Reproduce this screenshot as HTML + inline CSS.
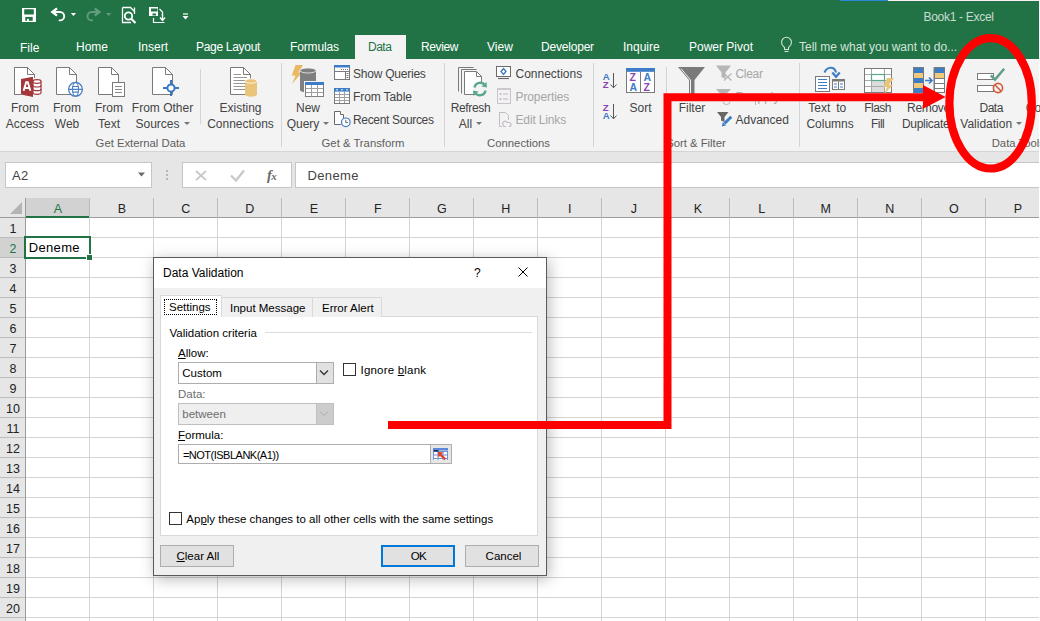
<!DOCTYPE html><html><head><meta charset="utf-8"><style>
html,body{margin:0;padding:0;}
body{width:1040px;height:621px;overflow:hidden;position:relative;background:#fff;font-family:"Liberation Sans",sans-serif;}
.t{position:absolute;white-space:nowrap;}
.r{position:absolute;box-sizing:border-box;}
svg{position:absolute;overflow:visible;}
</style></head><body>
<div class="r" style="left:0px;top:0px;width:1039px;height:59px;background:#217346;"></div>
<div class="r" style="left:840px;top:0px;width:48px;height:1px;background:#2b88d8;"></div>
<div class="r" style="left:888px;top:0px;width:151px;height:1px;background:#fbeef4;"></div>
<div class="t" style="left:923.5px;top:7.34px;font-size:12px;line-height:20px;color:#c9dccf;letter-spacing:-0.3px;">Book1 - Excel</div>
<div class="r" style="left:355px;top:35px;width:51px;height:24px;background:#f3f3f3;"></div>
<div class="t" style="left:20px;top:37.84px;font-size:12px;line-height:20px;color:#fff;letter-spacing:0px;">File</div>
<div class="t" style="left:76px;top:36.84px;font-size:12px;line-height:20px;color:#fff;letter-spacing:0px;">Home</div>
<div class="t" style="left:138px;top:36.84px;font-size:12px;line-height:20px;color:#fff;letter-spacing:0px;">Insert</div>
<div class="t" style="left:196px;top:36.84px;font-size:12px;line-height:20px;color:#fff;letter-spacing:-0.3px;">Page Layout</div>
<div class="t" style="left:290px;top:36.84px;font-size:12px;line-height:20px;color:#fff;letter-spacing:-0.15px;">Formulas</div>
<div class="t" style="left:368px;top:36.84px;font-size:12px;line-height:20px;color:#217346;letter-spacing:-0.5px;">Data</div>
<div class="t" style="left:421px;top:36.84px;font-size:12px;line-height:20px;color:#fff;letter-spacing:-0.4px;">Review</div>
<div class="t" style="left:487px;top:36.84px;font-size:12px;line-height:20px;color:#fff;letter-spacing:0px;">View</div>
<div class="t" style="left:541px;top:36.84px;font-size:12px;line-height:20px;color:#fff;letter-spacing:-0.2px;">Developer</div>
<div class="t" style="left:623px;top:36.84px;font-size:12px;line-height:20px;color:#fff;letter-spacing:0px;">Inquire</div>
<div class="t" style="left:689px;top:36.84px;font-size:12px;line-height:20px;color:#fff;letter-spacing:0px;">Power Pivot</div>
<div class="t" style="left:799px;top:36.84px;font-size:12px;line-height:20px;color:#d3e3d8;">Tell me what you want to do...</div>
<svg style="left:0;top:0" width="800" height="60"><path d="M784.5 49.5V47.5C782.5 46 781.5 44.2 781.5 42.3A5 5 0 0 1 791.5 42.3C791.5 44.2 790.5 46 788.5 47.5V49.5Z" fill="none" stroke="#d3e3d8" stroke-width="1.1"/><path d="M784.5 51.5H788.5" stroke="#d3e3d8" stroke-width="1.1"/></svg><div class="r" style="left:0px;top:59px;width:1039px;height:92px;background:#f3f3f3;"></div>
<div class="r" style="left:0px;top:151px;width:1039px;height:1px;background:#d5d5d5;"></div>
<div class="t" style="left:-75px;width:200px;text-align:center;top:97.84px;font-size:12px;line-height:20px;color:#444;letter-spacing:0px;">From</div>
<div class="t" style="left:-75px;width:200px;text-align:center;top:113.84px;font-size:12px;line-height:20px;color:#444;letter-spacing:0px;">Access</div>
<div class="t" style="left:-33px;width:200px;text-align:center;top:97.84px;font-size:12px;line-height:20px;color:#444;letter-spacing:0px;">From</div>
<div class="t" style="left:-33px;width:200px;text-align:center;top:113.84px;font-size:12px;line-height:20px;color:#444;letter-spacing:0px;">Web</div>
<div class="t" style="left:9px;width:200px;text-align:center;top:97.84px;font-size:12px;line-height:20px;color:#444;letter-spacing:0px;">From</div>
<div class="t" style="left:9px;width:200px;text-align:center;top:113.84px;font-size:12px;line-height:20px;color:#444;letter-spacing:0px;">Text</div>
<div class="t" style="left:62.5px;width:200px;text-align:center;top:97.84px;font-size:12px;line-height:20px;color:#444;letter-spacing:0px;">From Other</div>
<div class="t" style="left:62.5px;width:200px;text-align:center;top:113.84px;font-size:12px;line-height:20px;color:#444;letter-spacing:0px;">Sources<span style="display:inline-block;width:0;height:0;border-left:3px solid transparent;border-right:3px solid transparent;border-top:3px solid #777;vertical-align:middle;margin-left:4px;position:relative;top:-1px"></span></div>
<div class="t" style="left:140.5px;width:200px;text-align:center;top:97.84px;font-size:12px;line-height:20px;color:#444;letter-spacing:0px;">Existing</div>
<div class="t" style="left:140.5px;width:200px;text-align:center;top:113.84px;font-size:12px;line-height:20px;color:#444;letter-spacing:0px;">Connections</div>
<div class="t" style="left:208px;width:200px;text-align:center;top:97.84px;font-size:12px;line-height:20px;color:#444;letter-spacing:0px;">New</div>
<div class="t" style="left:208px;width:200px;text-align:center;top:113.84px;font-size:12px;line-height:20px;color:#444;letter-spacing:0px;">Query<span style="display:inline-block;width:0;height:0;border-left:3px solid transparent;border-right:3px solid transparent;border-top:3px solid #777;vertical-align:middle;margin-left:4px;position:relative;top:-1px"></span></div>
<div class="t" style="left:370.5px;width:200px;text-align:center;top:97.84px;font-size:12px;line-height:20px;color:#444;letter-spacing:-0.35px;">Refresh</div>
<div class="t" style="left:370.5px;width:200px;text-align:center;top:113.84px;font-size:12px;line-height:20px;color:#444;">All<span style="display:inline-block;width:0;height:0;border-left:3px solid transparent;border-right:3px solid transparent;border-top:3px solid #777;vertical-align:middle;margin-left:4px;position:relative;top:-1px"></span></div>
<div class="t" style="left:777.6px;width:200px;text-align:center;top:97.84px;font-size:12px;line-height:20px;color:#444;letter-spacing:-0.5px;">Flash</div>
<div class="t" style="left:777.6px;width:200px;text-align:center;top:113.84px;font-size:12px;line-height:20px;color:#444;letter-spacing:-0.5px;">Fill</div>
<div class="t" style="left:828.5px;width:200px;text-align:center;top:97.84px;font-size:12px;line-height:20px;color:#444;letter-spacing:-0.3px;">Remove</div>
<div class="t" style="left:828.5px;width:200px;text-align:center;top:113.84px;font-size:12px;line-height:20px;color:#444;letter-spacing:-0.3px;">Duplicates</div>
<div class="t" style="left:891.2px;width:200px;text-align:center;top:97.84px;font-size:12px;line-height:20px;color:#444;letter-spacing:-0.5px;">Data</div>
<div class="t" style="left:891.2px;width:200px;text-align:center;top:113.84px;font-size:12px;line-height:20px;color:#444;">Validation<span style="display:inline-block;width:0;height:0;border-left:3px solid transparent;border-right:3px solid transparent;border-top:3px solid #777;vertical-align:middle;margin-left:4px;position:relative;top:-1px"></span></div>
<div class="t" style="left:727.3px;width:200px;text-align:center;top:97.84px;font-size:12px;line-height:20px;color:#444;word-spacing:2.5px;">Text to</div>
<div class="t" style="left:730.1px;width:200px;text-align:center;top:113.84px;font-size:12px;line-height:20px;color:#444;">Columns</div>
<div class="t" style="left:540.5px;width:200px;text-align:center;top:97.84px;font-size:12px;line-height:20px;color:#444;">Sort</div>
<div class="t" style="left:592px;width:200px;text-align:center;top:97.84px;font-size:12px;line-height:20px;color:#444;">Filter</div>
<div class="t" style="left:1025.8px;top:97.84px;font-size:12px;line-height:20px;color:#444;">Co</div>
<div class="t" style="left:353px;top:63.84px;font-size:12px;line-height:20px;color:#444;letter-spacing:-0.23px;">Show Queries</div>
<div class="t" style="left:353px;top:86.84px;font-size:12px;line-height:20px;color:#444;letter-spacing:-0.1px;">From Table</div>
<div class="t" style="left:353px;top:109.84px;font-size:12px;line-height:20px;color:#444;letter-spacing:-0.34px;">Recent Sources</div>
<div class="t" style="left:515.5px;top:63.84px;font-size:12px;line-height:20px;color:#444;letter-spacing:0px;">Connections</div>
<div class="t" style="left:515.5px;top:86.84px;font-size:12px;line-height:20px;color:#a6a6a6;letter-spacing:-0.1px;">Properties</div>
<div class="t" style="left:515.5px;top:109.84px;font-size:12px;line-height:20px;color:#a6a6a6;letter-spacing:-0.15px;">Edit Links</div>
<div class="t" style="left:735.5px;top:63.84px;font-size:12px;line-height:20px;color:#a6a6a6;letter-spacing:-0.3px;">Clear</div>
<div class="t" style="left:735.5px;top:86.84px;font-size:12px;line-height:20px;color:#a6a6a6;letter-spacing:0px;">Reapply</div>
<div class="t" style="left:735.5px;top:109.84px;font-size:12px;line-height:20px;color:#444;letter-spacing:0px;">Advanced</div>
<div class="t" style="left:991.7px;top:132.58px;font-size:11.3px;line-height:20px;color:#5e5e5e;">Data Tools</div>
<div class="t" style="left:40.5px;width:200px;text-align:center;top:132.58px;font-size:11.3px;line-height:20px;color:#5e5e5e;">Get External Data</div>
<div class="t" style="left:263px;width:200px;text-align:center;top:132.58px;font-size:11.3px;line-height:20px;color:#5e5e5e;">Get &amp; Transform</div>
<div class="t" style="left:418.5px;width:200px;text-align:center;top:132.58px;font-size:11.3px;line-height:20px;color:#5e5e5e;">Connections</div>
<div class="t" style="left:596px;width:200px;text-align:center;top:132.58px;font-size:11.3px;line-height:20px;color:#5e5e5e;">Sort &amp; Filter</div>
<div class="r" style="left:281px;top:63px;width:1px;height:84px;background:#d4d4d4;"></div>
<div class="r" style="left:444px;top:63px;width:1px;height:84px;background:#d4d4d4;"></div>
<div class="r" style="left:593px;top:63px;width:1px;height:84px;background:#d4d4d4;"></div>
<div class="r" style="left:799px;top:63px;width:1px;height:84px;background:#d4d4d4;"></div>
<div class="r" style="left:200px;top:69px;width:1px;height:55px;background:#d4d4d4;"></div>
<div class="r" style="left:666px;top:67px;width:1px;height:58px;background:#d4d4d4;"></div>
<div class="r" style="left:0px;top:152px;width:1039px;height:46px;background:#e6e6e6;"></div>
<div class="r" style="left:5px;top:162px;width:147px;height:26px;background:#fff;border:1px solid #c6c6c6;"></div>
<div class="t" style="left:12px;top:165.50px;font-size:13px;line-height:20px;color:#444;letter-spacing:0.3px;">A2</div>
<div class="r" style="left:182px;top:162px;width:110px;height:26px;background:#fff;border:1px solid #c6c6c6;"></div>
<svg style="left:0;top:0" width="400" height="200"><path d="M138 172.5H145L141.5 176.5Z" fill="#6a6a6a"/><circle cx="167" cy="171" r="0.9" fill="#a0a0a0"/><circle cx="167" cy="175" r="0.9" fill="#a0a0a0"/><circle cx="167" cy="179" r="0.9" fill="#a0a0a0"/><path d="M196 171L206 180M206 171L196 180" stroke="#c8c8c8" stroke-width="1.7"/><path d="M231 175.5L236 180.5L244 170.5" fill="none" stroke="#c8c8c8" stroke-width="2.3"/></svg>
<div class="t" style="left:267px;top:166px;font-family:'Liberation Serif',serif;font-style:italic;font-weight:bold;font-size:14.5px;line-height:18px;color:#6a6a6a;">f<span style="font-size:11px;position:relative;top:0px;left:-0.5px">x</span></div>
<div class="r" style="left:295px;top:162px;width:744px;height:26px;background:#fff;border:1px solid #c6c6c6;border-right:none;"></div>
<div class="t" style="left:307.5px;top:165.50px;font-size:13px;line-height:20px;color:#444;letter-spacing:0.35px;">Deneme</div>
<div class="r" style="left:0px;top:198px;width:1039px;height:20px;background:#e6e6e6;"></div>
<div class="r" style="left:25px;top:198px;width:65px;height:20px;background:#d2d2d2;"></div>
<div class="r" style="left:0px;top:217px;width:1039px;height:1px;background:#9b9b9b;"></div>
<div class="r" style="left:25px;top:216px;width:65px;height:2px;background:#217346;"></div>
<svg style="left:0;top:0" width="30" height="220"><path d="M10 214H22V202Z" fill="#b4b4b4"/></svg>
<div class="t" style="left:-42.2px;width:200px;text-align:center;top:198.67px;font-size:12.5px;line-height:20px;color:#217346;">A</div>
<div class="r" style="left:89px;top:198px;width:1px;height:20px;background:#bcbcbc;"></div>
<div class="t" style="left:21.799999999999997px;width:200px;text-align:center;top:198.67px;font-size:12.5px;line-height:20px;color:#222;">B</div>
<div class="r" style="left:153px;top:198px;width:1px;height:20px;background:#bcbcbc;"></div>
<div class="t" style="left:85.80000000000001px;width:200px;text-align:center;top:198.67px;font-size:12.5px;line-height:20px;color:#222;">C</div>
<div class="r" style="left:217px;top:198px;width:1px;height:20px;background:#bcbcbc;"></div>
<div class="t" style="left:149.8px;width:200px;text-align:center;top:198.67px;font-size:12.5px;line-height:20px;color:#222;">D</div>
<div class="r" style="left:281px;top:198px;width:1px;height:20px;background:#bcbcbc;"></div>
<div class="t" style="left:213.8px;width:200px;text-align:center;top:198.67px;font-size:12.5px;line-height:20px;color:#222;">E</div>
<div class="r" style="left:345px;top:198px;width:1px;height:20px;background:#bcbcbc;"></div>
<div class="t" style="left:277.8px;width:200px;text-align:center;top:198.67px;font-size:12.5px;line-height:20px;color:#222;">F</div>
<div class="r" style="left:409px;top:198px;width:1px;height:20px;background:#bcbcbc;"></div>
<div class="t" style="left:341.8px;width:200px;text-align:center;top:198.67px;font-size:12.5px;line-height:20px;color:#222;">G</div>
<div class="r" style="left:473px;top:198px;width:1px;height:20px;background:#bcbcbc;"></div>
<div class="t" style="left:405.8px;width:200px;text-align:center;top:198.67px;font-size:12.5px;line-height:20px;color:#222;">H</div>
<div class="r" style="left:537px;top:198px;width:1px;height:20px;background:#bcbcbc;"></div>
<div class="t" style="left:469.79999999999995px;width:200px;text-align:center;top:198.67px;font-size:12.5px;line-height:20px;color:#222;">I</div>
<div class="r" style="left:601px;top:198px;width:1px;height:20px;background:#bcbcbc;"></div>
<div class="t" style="left:533.8px;width:200px;text-align:center;top:198.67px;font-size:12.5px;line-height:20px;color:#222;">J</div>
<div class="r" style="left:665px;top:198px;width:1px;height:20px;background:#bcbcbc;"></div>
<div class="t" style="left:597.8px;width:200px;text-align:center;top:198.67px;font-size:12.5px;line-height:20px;color:#222;">K</div>
<div class="r" style="left:729px;top:198px;width:1px;height:20px;background:#bcbcbc;"></div>
<div class="t" style="left:661.8px;width:200px;text-align:center;top:198.67px;font-size:12.5px;line-height:20px;color:#222;">L</div>
<div class="r" style="left:793px;top:198px;width:1px;height:20px;background:#bcbcbc;"></div>
<div class="t" style="left:725.8px;width:200px;text-align:center;top:198.67px;font-size:12.5px;line-height:20px;color:#222;">M</div>
<div class="r" style="left:857px;top:198px;width:1px;height:20px;background:#bcbcbc;"></div>
<div class="t" style="left:789.8px;width:200px;text-align:center;top:198.67px;font-size:12.5px;line-height:20px;color:#222;">N</div>
<div class="r" style="left:921px;top:198px;width:1px;height:20px;background:#bcbcbc;"></div>
<div class="t" style="left:853.8px;width:200px;text-align:center;top:198.67px;font-size:12.5px;line-height:20px;color:#222;">O</div>
<div class="r" style="left:985px;top:198px;width:1px;height:20px;background:#bcbcbc;"></div>
<div class="t" style="left:917.8px;width:200px;text-align:center;top:198.67px;font-size:12.5px;line-height:20px;color:#222;">P</div>
<div class="r" style="left:1049px;top:198px;width:1px;height:20px;background:#bcbcbc;"></div>
<div class="r" style="left:0px;top:218px;width:25px;height:403px;background:#e6e6e6;"></div>
<div class="r" style="left:0px;top:237px;width:25px;height:20px;background:#d2d2d2;"></div>
<div class="r" style="left:25px;top:198px;width:1px;height:423px;background:#9b9b9b;"></div>
<div class="r" style="left:0px;top:237px;width:25px;height:1px;background:#bcbcbc;"></div>
<div class="r" style="left:26px;top:237px;width:1013px;height:1px;background:#d4d4d4;"></div>
<div class="t" style="left:-87px;width:200px;text-align:center;top:218.67px;font-size:12.5px;line-height:20px;color:#222;">1</div>
<div class="r" style="left:0px;top:257px;width:25px;height:1px;background:#bcbcbc;"></div>
<div class="r" style="left:26px;top:257px;width:1013px;height:1px;background:#d4d4d4;"></div>
<div class="t" style="left:-87px;width:200px;text-align:center;top:238.67px;font-size:12.5px;line-height:20px;color:#217346;">2</div>
<div class="r" style="left:0px;top:277px;width:25px;height:1px;background:#bcbcbc;"></div>
<div class="r" style="left:26px;top:277px;width:1013px;height:1px;background:#d4d4d4;"></div>
<div class="t" style="left:-87px;width:200px;text-align:center;top:258.67px;font-size:12.5px;line-height:20px;color:#222;">3</div>
<div class="r" style="left:0px;top:297px;width:25px;height:1px;background:#bcbcbc;"></div>
<div class="r" style="left:26px;top:297px;width:1013px;height:1px;background:#d4d4d4;"></div>
<div class="t" style="left:-87px;width:200px;text-align:center;top:278.67px;font-size:12.5px;line-height:20px;color:#222;">4</div>
<div class="r" style="left:0px;top:317px;width:25px;height:1px;background:#bcbcbc;"></div>
<div class="r" style="left:26px;top:317px;width:1013px;height:1px;background:#d4d4d4;"></div>
<div class="t" style="left:-87px;width:200px;text-align:center;top:298.67px;font-size:12.5px;line-height:20px;color:#222;">5</div>
<div class="r" style="left:0px;top:337px;width:25px;height:1px;background:#bcbcbc;"></div>
<div class="r" style="left:26px;top:337px;width:1013px;height:1px;background:#d4d4d4;"></div>
<div class="t" style="left:-87px;width:200px;text-align:center;top:318.67px;font-size:12.5px;line-height:20px;color:#222;">6</div>
<div class="r" style="left:0px;top:357px;width:25px;height:1px;background:#bcbcbc;"></div>
<div class="r" style="left:26px;top:357px;width:1013px;height:1px;background:#d4d4d4;"></div>
<div class="t" style="left:-87px;width:200px;text-align:center;top:338.67px;font-size:12.5px;line-height:20px;color:#222;">7</div>
<div class="r" style="left:0px;top:377px;width:25px;height:1px;background:#bcbcbc;"></div>
<div class="r" style="left:26px;top:377px;width:1013px;height:1px;background:#d4d4d4;"></div>
<div class="t" style="left:-87px;width:200px;text-align:center;top:358.67px;font-size:12.5px;line-height:20px;color:#222;">8</div>
<div class="r" style="left:0px;top:397px;width:25px;height:1px;background:#bcbcbc;"></div>
<div class="r" style="left:26px;top:397px;width:1013px;height:1px;background:#d4d4d4;"></div>
<div class="t" style="left:-87px;width:200px;text-align:center;top:378.67px;font-size:12.5px;line-height:20px;color:#222;">9</div>
<div class="r" style="left:0px;top:417px;width:25px;height:1px;background:#bcbcbc;"></div>
<div class="r" style="left:26px;top:417px;width:1013px;height:1px;background:#d4d4d4;"></div>
<div class="t" style="left:-87px;width:200px;text-align:center;top:398.67px;font-size:12.5px;line-height:20px;color:#222;">10</div>
<div class="r" style="left:0px;top:437px;width:25px;height:1px;background:#bcbcbc;"></div>
<div class="r" style="left:26px;top:437px;width:1013px;height:1px;background:#d4d4d4;"></div>
<div class="t" style="left:-87px;width:200px;text-align:center;top:418.67px;font-size:12.5px;line-height:20px;color:#222;">11</div>
<div class="r" style="left:0px;top:457px;width:25px;height:1px;background:#bcbcbc;"></div>
<div class="r" style="left:26px;top:457px;width:1013px;height:1px;background:#d4d4d4;"></div>
<div class="t" style="left:-87px;width:200px;text-align:center;top:438.67px;font-size:12.5px;line-height:20px;color:#222;">12</div>
<div class="r" style="left:0px;top:477px;width:25px;height:1px;background:#bcbcbc;"></div>
<div class="r" style="left:26px;top:477px;width:1013px;height:1px;background:#d4d4d4;"></div>
<div class="t" style="left:-87px;width:200px;text-align:center;top:458.67px;font-size:12.5px;line-height:20px;color:#222;">13</div>
<div class="r" style="left:0px;top:497px;width:25px;height:1px;background:#bcbcbc;"></div>
<div class="r" style="left:26px;top:497px;width:1013px;height:1px;background:#d4d4d4;"></div>
<div class="t" style="left:-87px;width:200px;text-align:center;top:478.67px;font-size:12.5px;line-height:20px;color:#222;">14</div>
<div class="r" style="left:0px;top:517px;width:25px;height:1px;background:#bcbcbc;"></div>
<div class="r" style="left:26px;top:517px;width:1013px;height:1px;background:#d4d4d4;"></div>
<div class="t" style="left:-87px;width:200px;text-align:center;top:498.67px;font-size:12.5px;line-height:20px;color:#222;">15</div>
<div class="r" style="left:0px;top:537px;width:25px;height:1px;background:#bcbcbc;"></div>
<div class="r" style="left:26px;top:537px;width:1013px;height:1px;background:#d4d4d4;"></div>
<div class="t" style="left:-87px;width:200px;text-align:center;top:518.67px;font-size:12.5px;line-height:20px;color:#222;">16</div>
<div class="r" style="left:0px;top:557px;width:25px;height:1px;background:#bcbcbc;"></div>
<div class="r" style="left:26px;top:557px;width:1013px;height:1px;background:#d4d4d4;"></div>
<div class="t" style="left:-87px;width:200px;text-align:center;top:538.67px;font-size:12.5px;line-height:20px;color:#222;">17</div>
<div class="r" style="left:0px;top:577px;width:25px;height:1px;background:#bcbcbc;"></div>
<div class="r" style="left:26px;top:577px;width:1013px;height:1px;background:#d4d4d4;"></div>
<div class="t" style="left:-87px;width:200px;text-align:center;top:558.67px;font-size:12.5px;line-height:20px;color:#222;">18</div>
<div class="r" style="left:0px;top:597px;width:25px;height:1px;background:#bcbcbc;"></div>
<div class="r" style="left:26px;top:597px;width:1013px;height:1px;background:#d4d4d4;"></div>
<div class="t" style="left:-87px;width:200px;text-align:center;top:578.67px;font-size:12.5px;line-height:20px;color:#222;">19</div>
<div class="r" style="left:0px;top:617px;width:25px;height:1px;background:#bcbcbc;"></div>
<div class="r" style="left:26px;top:617px;width:1013px;height:1px;background:#d4d4d4;"></div>
<div class="t" style="left:-87px;width:200px;text-align:center;top:598.67px;font-size:12.5px;line-height:20px;color:#222;">20</div>
<div class="r" style="left:89px;top:218px;width:1px;height:403px;background:#d4d4d4;"></div>
<div class="r" style="left:153px;top:218px;width:1px;height:403px;background:#d4d4d4;"></div>
<div class="r" style="left:217px;top:218px;width:1px;height:403px;background:#d4d4d4;"></div>
<div class="r" style="left:281px;top:218px;width:1px;height:403px;background:#d4d4d4;"></div>
<div class="r" style="left:345px;top:218px;width:1px;height:403px;background:#d4d4d4;"></div>
<div class="r" style="left:409px;top:218px;width:1px;height:403px;background:#d4d4d4;"></div>
<div class="r" style="left:473px;top:218px;width:1px;height:403px;background:#d4d4d4;"></div>
<div class="r" style="left:537px;top:218px;width:1px;height:403px;background:#d4d4d4;"></div>
<div class="r" style="left:601px;top:218px;width:1px;height:403px;background:#d4d4d4;"></div>
<div class="r" style="left:665px;top:218px;width:1px;height:403px;background:#d4d4d4;"></div>
<div class="r" style="left:729px;top:218px;width:1px;height:403px;background:#d4d4d4;"></div>
<div class="r" style="left:793px;top:218px;width:1px;height:403px;background:#d4d4d4;"></div>
<div class="r" style="left:857px;top:218px;width:1px;height:403px;background:#d4d4d4;"></div>
<div class="r" style="left:921px;top:218px;width:1px;height:403px;background:#d4d4d4;"></div>
<div class="r" style="left:985px;top:218px;width:1px;height:403px;background:#d4d4d4;"></div>
<div class="r" style="left:1049px;top:218px;width:1px;height:403px;background:#d4d4d4;"></div>
<div class="r" style="left:24px;top:236px;width:67px;height:23px;border:2px solid #217346;"></div>
<div class="r" style="left:86px;top:254px;width:7px;height:7px;background:#217346;border:1px solid #fff;"></div>
<div class="t" style="left:28.7px;top:238.00px;font-size:13px;line-height:20px;color:#000;letter-spacing:0.35px;">Deneme</div>
<div class="r" style="left:153px;top:257px;width:394px;height:319px;background:#f0f0f0;border:1px solid #5a5a5a;box-shadow:2px 3px 14px rgba(0,0,0,0.28);"></div>
<div class="r" style="left:154px;top:258px;width:392px;height:30px;background:#fff;"></div>
<div class="t" style="left:163px;top:262.84px;font-size:12px;line-height:20px;color:#000;">Data Validation</div>
<div class="t" style="left:474px;top:262.84px;font-size:12px;line-height:20px;color:#000;">?</div>
<svg style="left:518px;top:267px" width="10" height="10"><path d="M0.5 0.5L9.5 9.5M9.5 0.5L0.5 9.5" stroke="#000" stroke-width="1"/></svg>
<div class="r" style="left:160px;top:316px;width:378px;height:220px;background:#fff;border:1px solid #d9d9d9;"></div>
<div class="r" style="left:221px;top:297px;width:92px;height:20px;background:#f0f0f0;border:1px solid #d9d9d9;border-bottom:none;"></div>
<div class="r" style="left:312px;top:297px;width:70px;height:20px;background:#f0f0f0;border:1px solid #d9d9d9;border-bottom:none;"></div>
<div class="r" style="left:160px;top:295px;width:62px;height:22px;background:#fff;border:1px solid #d9d9d9;border-bottom:none;"></div>
<div class="r" style="left:164px;top:299px;width:53px;height:16px;border:1px dotted #000;"></div>
<div class="t" style="left:169px;top:297.02px;font-size:11.5px;line-height:20px;color:#000;">Settings</div>
<div class="t" style="left:230px;top:298.02px;font-size:11.5px;line-height:20px;color:#000;">Input Message</div>
<div class="t" style="left:322px;top:298.02px;font-size:11.5px;line-height:20px;color:#000;">Error Alert</div>
<div class="t" style="left:169.5px;top:323.02px;font-size:11.5px;line-height:20px;color:#000;">Validation criteria</div>
<div class="r" style="left:265px;top:332px;width:267px;height:1px;background:#dcdcdc;"></div>
<div class="t" style="left:178px;top:343.02px;font-size:11.5px;line-height:20px;color:#000;"><u>A</u>llow:</div>
<div class="r" style="left:178px;top:362px;width:156px;height:22px;background:#fff;border:1px solid #adadad;"></div>
<div class="r" style="left:316px;top:363px;width:17px;height:20px;background:#e1e1e1;border-left:1px solid #adadad;"></div>
<div class="t" style="left:182.3px;top:363.02px;font-size:11.5px;line-height:20px;color:#000;">Custom</div>
<div class="r" style="left:343px;top:363px;width:13px;height:13px;background:#fff;border:1px solid #333;"></div>
<div class="t" style="left:360.5px;top:359.52px;font-size:11.5px;line-height:20px;color:#000;letter-spacing:0.2px;">Ignore <u>b</u>lank</div>
<div class="t" style="left:178px;top:384.02px;font-size:11.5px;line-height:20px;color:#6d6d6d;">Data:</div>
<div class="r" style="left:178px;top:403px;width:156px;height:22px;background:#efefef;border:1px solid #bfbfbf;"></div>
<div class="r" style="left:316px;top:404px;width:17px;height:20px;background:#cccccc;border-left:1px solid #bfbfbf;"></div>
<div class="t" style="left:182.3px;top:404.02px;font-size:11.5px;line-height:20px;color:#6d6d6d;">between</div>
<svg style="left:0;top:0" width="600" height="600"><path d="M320 370.5L324 374.5L328 370.5" fill="none" stroke="#333" stroke-width="1.3"/><path d="M320 411.5L324 415.5L328 411.5" fill="none" stroke="#a8a8a8" stroke-width="1"/></svg>
<div class="t" style="left:178px;top:425.02px;font-size:11.5px;line-height:20px;color:#000;"><u>F</u>ormula:</div>
<div class="r" style="left:178px;top:444px;width:274px;height:20px;background:#fff;border:1px solid #adadad;"></div>
<div class="r" style="left:430px;top:444px;width:22px;height:20px;background:#e6e6e6;border:1px solid #adadad;"></div>
<svg style="left:0;top:0" width="600" height="600"><rect x="433" y="448" width="15" height="12" fill="#fff"/><path d="M433 451.5H448M433 455H448M433 458.5H448M438 451V460M443 451V460M433.5 451V460M447.5 451V460" stroke="#6f93d3" stroke-width="1"/><rect x="433" y="448" width="15" height="2.6" fill="#5b88d8"/><rect x="433.5" y="450" width="5" height="1.6" fill="#1f2f55"/><path d="M437.8 451.8L443.5 452.6L441.6 454.3L446.2 458.6L444.6 460.2L440 455.9L438.3 457.6Z" fill="#e0452f"/></svg>
<div class="t" style="left:182.9px;top:445.19px;font-size:11px;line-height:20px;color:#000;letter-spacing:-0.5px;">=NOT(ISBLANK(A1))</div>
<div class="r" style="left:169px;top:512px;width:13px;height:13px;background:#fff;border:1px solid #333;"></div>
<div class="t" style="left:186.3px;top:509.02px;font-size:11.5px;line-height:20px;color:#000;">Ap<u>p</u>ly these changes to all other cells with the same settings</div>
<div class="r" style="left:160px;top:545px;width:74px;height:22px;background:#e1e1e1;border:1px solid #adadad;"></div>
<div class="t" style="left:176.5px;top:546.02px;font-size:11.5px;line-height:20px;color:#000;"><u>C</u>lear All</div>
<div class="r" style="left:381px;top:545px;width:74px;height:22px;background:#e1e1e1;border:2px solid #0078d7;"></div>
<div class="t" style="left:410.7px;top:546.02px;font-size:11.5px;line-height:20px;color:#000;letter-spacing:-0.6px;">OK</div>
<div class="r" style="left:465px;top:545px;width:74px;height:22px;background:#e1e1e1;border:1px solid #adadad;"></div>
<div class="t" style="left:485.6px;top:546.02px;font-size:11.5px;line-height:20px;color:#000;">Cancel</div>
<svg style="left:0;top:0" width="1040" height="160"><rect x="22" y="8" width="14" height="14" fill="#fff"/><rect x="24.2" y="9.2" width="9.6" height="5.3" rx="0.6" fill="#217346"/><rect x="25.3" y="16.9" width="7.4" height="3.9" fill="#217346"/><rect x="27" y="18.9" width="2" height="2" fill="#fff"/><path d="M57 8.3L52.3 12L57 15.7" fill="none" stroke="#fff" stroke-width="2.3"/><path d="M53.5 12H60A4.2 4.2 0 0 1 60 20.4H59.5" fill="none" stroke="#fff" stroke-width="1.9" stroke-linecap="round"/><path d="M70.8 12.9H76.1L73.45 16Z" fill="#fff"/><g opacity="0.3"><path d="M94.7 8.3L99.4 12L94.7 15.7" fill="none" stroke="#fff" stroke-width="2.3"/><path d="M98.2 12H91.7A4.2 4.2 0 0 0 91.7 20.4H92.2" fill="none" stroke="#fff" stroke-width="1.9" stroke-linecap="round"/><path d="M106 12.9H111.3L108.65 16Z" fill="#fff"/></g><path d="M122.5 7.5H130.5L134.5 11.5V14M134.5 7.5V11.5M122.5 7.5V22.5H131" fill="none" stroke="#fff" stroke-width="1.3"/><circle cx="128.5" cy="16" r="3.7" fill="none" stroke="#fff" stroke-width="1.8"/><path d="M131 18.5L135.5 23" stroke="#fff" stroke-width="2.2"/><path d="M149 7H158V16H149Z" fill="#fff"/><rect x="151" y="8.5" width="6.5" height="3" fill="#217346"/><rect x="152.5" y="13.5" width="3.5" height="2" fill="#217346"/><path d="M153.5 18V22.5H164.5M159.5 9L162.5 12V16" fill="none" stroke="#fff" stroke-width="1.2"/><path d="M162.5 13V20M160 17.5L162.5 20.5L165 17.5" fill="none" stroke="#fff" stroke-width="1.3"/><path d="M183 14H188" stroke="#fff" stroke-width="1.2"/><path d="M182.5 16H188.5L185.5 19.5Z" fill="#fff"/><path d="M14.5 67.5H27.5L34.5 74.5V78M14.5 67.5V94.5H21" fill="#fff" stroke="#7a7a7a"/><path d="M15 68H27.5L34 74.5V94H15Z" fill="#fff"/><path d="M14.5 67.5H27.5L34.5 74.5V78M14.5 67.5V94.5H21M27.5 67.5V74.5H34.5" fill="none" stroke="#7a7a7a"/><path d="M33 81.5V92.5A4 1.8 0 0 0 41 92.5V81.5Z" fill="#fff"/><path d="M33 81.5V92.5A4 1.8 0 0 0 41 92.5V81.5" fill="none" stroke="#a4373a" stroke-width="1.2"/><ellipse cx="37" cy="81.5" rx="4" ry="1.8" fill="#fff" stroke="#a4373a" stroke-width="1.2"/><path d="M33 85.2A4 1.8 0 0 0 41 85.2M33 88.9A4 1.8 0 0 0 41 88.9" fill="none" stroke="#a4373a" stroke-width="1.2"/><path d="M21 79L33 76.8V97L21 94.5Z" fill="#a4373a"/><path d="M23.6 90.8L26.2 82.2H27.8L30.4 90.8M24.6 88H29.4" fill="none" stroke="#fff" stroke-width="1.9"/><path d="M56.5 67.5H69.5L76.5 74.5V94.5H56.5Z" fill="#fff" stroke="#7a7a7a" stroke-width="1"/><path d="M69.5 67.5V74.5H76.5" fill="none" stroke="#7a7a7a" stroke-width="1"/><circle cx="75.5" cy="89.3" r="6.9" fill="#fff" stroke="#4a7fc0" stroke-width="1.3"/><ellipse cx="75.5" cy="89.3" rx="3" ry="6.9" fill="none" stroke="#4a7fc0" stroke-width="1.1"/><path d="M68.6 89.3H82.4M72.5 86.5H78.5M72.5 92.1H78.5" stroke="#4a7fc0" stroke-width="1.2"/><path d="M98.5 67.5H111.5L118.5 74.5V94.5H98.5Z" fill="#fff" stroke="#7a7a7a" stroke-width="1"/><path d="M111.5 67.5V74.5H118.5" fill="none" stroke="#7a7a7a" stroke-width="1"/><rect x="112.5" y="82.5" width="12" height="14" fill="#fff" stroke="#7a7a7a"/><path d="M115 86.5H122M115 89.5H122M115 92.5H122" stroke="#8a8a8a" stroke-width="1"/><path d="M152.5 67.5H165.5L172.5 74.5V94.5H152.5Z" fill="#fff" stroke="#7a7a7a" stroke-width="1"/><path d="M165.5 67.5V74.5H172.5" fill="none" stroke="#7a7a7a" stroke-width="1"/><circle cx="171" cy="88" r="3.6" fill="#fff" stroke="#3c78c0" stroke-width="2"/><path d="M163 88H167.4M174.6 88H179M171 80V84.4M171 91.6V96" stroke="#3c78c0" stroke-width="2"/><path d="M230.5 67.5H243.5L250.5 74.5V94.5H230.5Z" fill="#fff" stroke="#7a7a7a" stroke-width="1"/><path d="M243.5 67.5V74.5H250.5" fill="none" stroke="#7a7a7a" stroke-width="1"/><path d="M233.5 74.5H241M233.5 77.5H247M233.5 80.5H247M233.5 83.5H245M233.5 86.5H245M233.5 89.5H245" stroke="#8a8a8a" stroke-width="0.9"/><path d="M245 81V94.5A6 2.2 0 0 0 257 94.5V81Z" fill="#e9c47a"/><ellipse cx="251" cy="81" rx="6" ry="2.2" fill="#e9c47a" stroke="#fff" stroke-width="0.8"/><path d="M295.5 65H303L298.5 72.5H302L292 84L295.5 75.5H291.7Z" fill="#e9b965"/><path d="M300 70.5V90A8 2.5 0 0 0 316 90V70.5Z" fill="#7f7f7f"/><ellipse cx="308" cy="70.5" rx="8" ry="2.5" fill="#7f7f7f" stroke="#f3f3f3" stroke-width="0.8"/><rect x="304" y="81" width="21" height="17" fill="#f3f3f3"/><rect x="305.5" y="82.5" width="18" height="14" fill="#fff" stroke="#7f7f7f"/><rect x="305" y="82" width="19" height="3" fill="#3d7cc6"/><path d="M306 88.5H323M306 92.5H323M311.5 85V96.5M317.5 85V96.5" stroke="#a0a0a0" stroke-width="1"/><rect x="334.5" y="65.5" width="15" height="14" fill="#fff" stroke="#7a7a7a"/><rect x="334" y="65" width="16" height="2.5" fill="#3d7cc6"/><path d="M335 71.5H349M345.5 71.5V79" stroke="#7a7a7a" stroke-width="1"/><path d="M341 69.5H342M343 69.5H344M345 69.5H346M347 69.5H348M346.5 73.5H348.5M346.5 75.5H348.5M346.5 77.5H348.5" stroke="#7a7a7a" stroke-width="1"/><rect x="334.5" y="88.5" width="15" height="15" fill="#fff" stroke="#7a7a7a"/><rect x="334" y="88" width="16" height="3.6" fill="#3d7cc6"/><path d="M335 94.5H349M335 97.5H349M335 100.5H349M339.5 91.5V103M344.5 91.5V103" stroke="#a0a0a0" stroke-width="1"/><path d="M336 89.8H338M341 89.8H343M346 89.8H348" stroke="#fff" stroke-width="0.9"/><path d="M334.5 111.5H340.5L343.5 114.5V124.5H334.5Z" fill="#fff"/><path d="M343.5 114.5V118M340.5 111.5H334.5V124.5H341" fill="none" stroke="#6a6a6a" stroke-width="1"/><path d="M340.5 111.5V114.5H343.5" fill="none" stroke="#6a6a6a"/><circle cx="345.8" cy="122.3" r="4.3" fill="#fff" stroke="#3d7cc6" stroke-width="1.2"/><path d="M345.8 119.8V122.6H348" fill="none" stroke="#555" stroke-width="0.9"/><path d="M458.5 67.5H473.5M458.5 67.5V91.5" fill="none" stroke="#7a7a7a"/><path d="M461.5 69.5H476.5M461.5 69.5V93.5" fill="none" stroke="#7a7a7a"/><path d="M464.5 71.5H476.5L481.5 76.5V94.5H464.5Z" fill="#fff" stroke="#7a7a7a" stroke-width="1"/><path d="M476.5 71.5V76.5H481.5" fill="none" stroke="#7a7a7a" stroke-width="1"/><circle cx="480" cy="89" r="6.5" fill="#f3f3f3"/><path d="M474.5 87.5A5.7 5.7 0 0 1 485 85.5M485.5 90.5A5.7 5.7 0 0 1 475 92.5" fill="none" stroke="#5aa88a" stroke-width="2.4"/><path d="M486.5 82L487 87.5L481.5 86.5Z M473.5 96L473 90.5L478.5 91.5Z" fill="#5aa88a"/><rect x="496.5" y="66.5" width="14" height="10" fill="#fff" stroke="#6a6a6a" stroke-width="1"/><path d="M498 78.5H509" stroke="#6a6a6a" stroke-width="1.2"/><path d="M503.5 68.5L506 71.5L503.5 74.5L501 71.5Z" fill="none" stroke="#3d7cc6" stroke-width="1.4"/><g opacity="0.45"><rect x="497.5" y="88.5" width="13" height="15" fill="#f5f0f5" stroke="#9a8a9a"/><rect x="497" y="88" width="14" height="2" fill="#9a9a9a"/><circle cx="500.5" cy="94" r="1" fill="#777"/><circle cx="500.5" cy="99" r="1" fill="#777"/><path d="M503 94H508M503 99H508" stroke="#777"/></g><g opacity="0.45"><path d="M499.5 112.5H505.5L508.5 115.5V120M499.5 112.5V126.5H502" fill="none" stroke="#8a7a8a"/><path d="M503 124.5A2 2 0 0 1 507 122.5H509A2 2 0 0 1 509 126.5M506 126.5H504A2 2 0 0 1 503 124.5" fill="none" stroke="#8a7a8a" stroke-width="1.2"/></g><text x="602.7" y="79.8" font-family="Liberation Sans" font-weight="bold" font-size="9.6" fill="#3d7cc6">A</text><text x="602.7" y="87.8" font-family="Liberation Sans" font-weight="bold" font-size="9.6" fill="#8b42b5">Z</text><path d="M613.5 73V87.5M610.5 84.5L613.5 87.8L616.5 84.5" fill="none" stroke="#555" stroke-width="1"/><text x="602.7" y="110.8" font-family="Liberation Sans" font-weight="bold" font-size="9.6" fill="#8b42b5">Z</text><text x="602.7" y="118.8" font-family="Liberation Sans" font-weight="bold" font-size="9.6" fill="#3d7cc6">A</text><path d="M613.5 104V118.5M610.5 115.5L613.5 118.8L616.5 115.5" fill="none" stroke="#555" stroke-width="1"/><rect x="626.5" y="68.5" width="28" height="24" fill="#fff" stroke="#7a7a7a"/><rect x="626" y="68" width="29" height="3.8" fill="#3d7cc6"/><path d="M640.5 71.8V92.5" stroke="#7a7a7a"/><text x="629.5" y="81" font-family="Liberation Sans" font-weight="bold" font-size="10.5" fill="#8b42b5">Z</text><text x="629.5" y="91" font-family="Liberation Sans" font-weight="bold" font-size="10.5" fill="#3d7cc6">A</text><text x="643.5" y="81" font-family="Liberation Sans" font-weight="bold" font-size="10.5" fill="#3d7cc6">A</text><text x="643.5" y="91" font-family="Liberation Sans" font-weight="bold" font-size="10.5" fill="#8b42b5">Z</text><path d="M678 67H705L694.5 80V97H689V80Z" fill="#7a7a7a"/><path d="M681 68.5L690.5 80V96" fill="none" stroke="#fff" stroke-width="0.9"/><g opacity="0.5"><path d="M716 65.5H731L725.5 72.5V79L721.5 77V72.5Z" fill="#7a7a7a"/><path d="M724 73.5L731.5 80.5M731.5 73.5L724 80.5" stroke="#7a7a7a" stroke-width="1.3"/></g><g opacity="0.5"><path d="M716 89H731L725.5 95V100L721.5 98V95Z" fill="#7a7a7a"/><path d="M723 101.5A3.5 3 0 0 0 730 101.5" fill="none" stroke="#7a7a7a" stroke-width="1"/><path d="M755.5 101V105" stroke="#7a7a7a" stroke-width="1"/></g><path d="M717 112H728.5L724.5 117V122L721 120.5V117Z" fill="#666"/><path d="M724.5 123.5L731.3 116.8" stroke="#3d7cc6" stroke-width="3"/><path d="M721.8 126.6L722.8 122.3L726 125.5Z" fill="#3d7cc6"/><rect x="815.5" y="76.5" width="14" height="15" fill="#fff" stroke="#7a7a7a"/><path d="M818 79.5H827M818 82.5H827M818 85.5H827M818 88.5H827" stroke="#3d7cc6" stroke-width="1"/><rect x="832.5" y="79.5" width="12" height="10" fill="#fff" stroke="#7a7a7a"/><rect x="832" y="79" width="13" height="2.5" fill="#7a7a7a"/><path d="M838.5 81.5V89" stroke="#7a7a7a"/><path d="M834 84H837M840 84H843M834 87H837M840 87H843" stroke="#3d7cc6" stroke-width="1"/><path d="M824.5 72.5C827 66.5 834.5 66 836 72.5" fill="none" stroke="#3d7cc6" stroke-width="2"/><path d="M832.3 72.5L836 76.8L839.7 72.5" fill="none" stroke="#3d7cc6" stroke-width="2.2"/><rect x="864.5" y="68.5" width="27" height="24" fill="#fff" stroke="#7a7a7a"/><rect x="872" y="81" width="12" height="11" fill="#dcdcdc"/><path d="M865 74.5H891M865 80.5H891M865 86.5H891M871.5 69V92M884.5 69V92" stroke="#a8a8a8" stroke-width="1"/><rect x="871.5" y="74.5" width="13" height="6" fill="#fff" stroke="#5aa88a" stroke-width="1.2"/><path d="M865 92.5H891" stroke="#7a7a7a"/><path d="M887 78H894L889 85H893L884 94L887 87H883Z" fill="#e9c47a"/><rect x="913.5" y="67.5" width="10" height="25" fill="#fff" stroke="#7a7a7a"/><rect x="914" y="68" width="9" height="5" fill="#3d7cc6"/><rect x="914" y="73" width="9" height="5" fill="#efc97c"/><rect x="914" y="78" width="9" height="5" fill="#3d7cc6"/><rect x="914" y="83" width="9" height="5" fill="#efc97c"/><rect x="914" y="88" width="9" height="5" fill="#3d7cc6"/><rect x="934.5" y="67.5" width="10" height="25" fill="#fff" stroke="#7a7a7a"/><rect x="935" y="68" width="9" height="5" fill="#3d7cc6"/><rect x="935" y="73" width="9" height="5" fill="#efc97c"/><path d="M934 67.5V92.5M935 78.5H944M935 83.5H944M935 88.5H944" stroke="#7a7a7a"/><path d="M925 80.5H932M929 77.5L932 80.5L929 83.5" fill="none" stroke="#3d7cc6" stroke-width="1.6"/><rect x="977.5" y="73.5" width="16" height="6" fill="#fff" stroke="#7a7a7a"/><rect x="977.5" y="85.5" width="16" height="6" fill="#fff" stroke="#7a7a7a"/><path d="M990.8 75.3L995 79.6L1004.2 68.8" fill="none" stroke="#5e9f8b" stroke-width="2.5"/><circle cx="998" cy="88" r="4.6" fill="#f3f3f3" stroke="#d35a3a" stroke-width="1.6"/><path d="M994.8 84.8L1001.2 91.2" stroke="#d35a3a" stroke-width="1.6"/></svg>
<svg style="left:0;top:0" width="1040" height="621"><path d="M388 424.9H667.5V97.2H923.5" fill="none" stroke="#f00" stroke-width="8" stroke-linejoin="miter"/><path d="M923 84.9L945.7 97L923 108.7Z" fill="#f00"/><ellipse cx="990.6" cy="103.3" rx="41.2" ry="65.2" fill="none" stroke="#f00" stroke-width="8.2"/></svg>
</body></html>
